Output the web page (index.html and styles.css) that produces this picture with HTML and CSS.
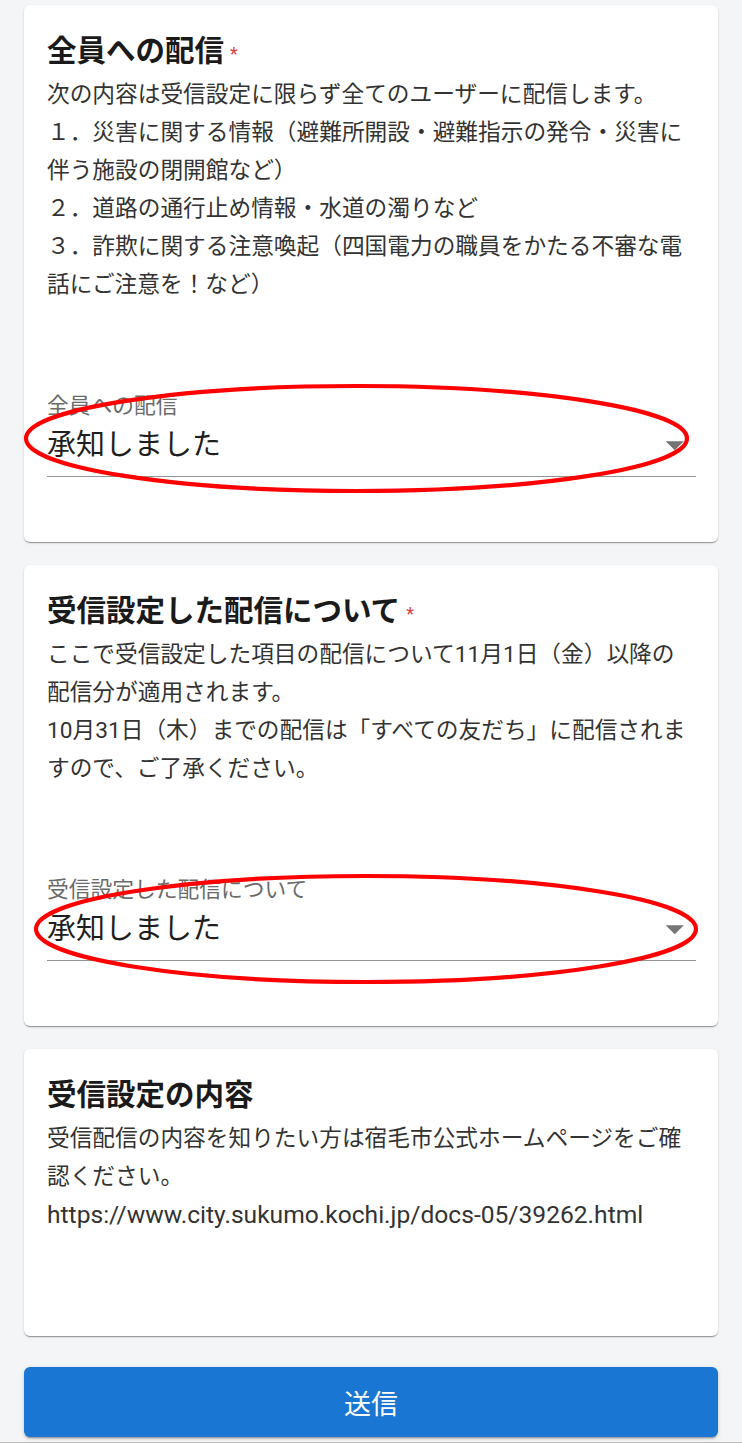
FILE: index.html
```html
<!DOCTYPE html>
<html lang="ja">
<head>
<meta charset="utf-8">
<title>受信設定</title>
<link rel="stylesheet" href="styles.css">
</head>
<body>
<div class="page">
  <section class="card">
    <h2 class="card-title">全員への配信<span class="req">*</span></h2>
    <div class="card-body">
      <p>次の内容は受信設定に限らず全てのユーザーに配信します。</p>
      <p>１．災害に関する情報（避難所開設・避難指示の発令・災害に伴う施設の閉開館など）</p>
      <p>２．道路の通行止め情報・水道の濁りなど</p>
      <p>３．詐欺に関する注意喚起（四国電力の職員をかたる不審な電話にご注意を！など）</p>
    </div>
    <div class="field">
      <div class="field-label">全員への配信</div>
      <div class="field-input">
        <span class="field-value">承知しました</span>
        <svg class="field-arrow" viewBox="0 0 24 24"><path d="M7 10l5 5 5-5z"/></svg>
      </div>
      <svg class="ring ring-1" viewBox="0 0 665 109"><ellipse cx="332.5" cy="54.5" rx="330.5" ry="52.5"/></svg>
    </div>
  </section>

  <section class="card">
    <h2 class="card-title">受信設定した配信について<span class="req">*</span></h2>
    <div class="card-body">
      <p>ここで受信設定した項目の配信について11月1日（金）以降の配信分が適用されます。</p>
      <p>10月31日（木）までの配信は「すべての友だち」に配信されますので、ご了承ください。</p>
    </div>
    <div class="field">
      <div class="field-label">受信設定した配信について</div>
      <div class="field-input">
        <span class="field-value">承知しました</span>
        <svg class="field-arrow" viewBox="0 0 24 24"><path d="M7 10l5 5 5-5z"/></svg>
      </div>
      <svg class="ring ring-2" viewBox="0 0 664 110"><ellipse cx="332" cy="55" rx="330" ry="53"/></svg>
    </div>
  </section>

  <section class="card card-info">
    <h2 class="card-title">受信設定の内容</h2>
    <div class="card-body">
      <p>受信配信の内容を知りたい方は宿毛市公式ホームページをご確認ください。</p>
      <p><span class="url">https://www.city.sukumo.kochi.jp/docs-05/39262.html</span></p>
    </div>
  </section>

  <button class="submit" type="button">送信</button>
</div>
<div class="bottom-line"></div>
</body>
</html>
```

FILE: styles.css
```css
* {
  box-sizing: border-box;
}

html, body {
  margin: 0;
  padding: 0;
  background: #f4f5f7;
}

body {
  width: 742px;
  height: 1443px;
  overflow: hidden;
  font-family: Roboto, "Noto Sans CJK JP", sans-serif;
  color: #333333;
}

.page {
  padding: 5px 24px 0;
  display: flex;
  flex-direction: column;
  gap: 23px;
}

.card {
  background: #ffffff;
  border-radius: 6px;
  box-shadow: 0 2px 1px -1px rgba(0, 0, 0, 0.22), 0 1px 1px 0 rgba(0, 0, 0, 0.16), 0 1px 3px 0 rgba(0, 0, 0, 0.12);
  padding: 28px 22px 65px 23px;
}

.card-info {
  padding-bottom: 101px;
}

.card-title {
  margin: 0;
  font-size: 29.5px;
  line-height: 36px;
  font-weight: 700;
  color: #1a1a1a;
  display: flex;
  align-items: flex-start;
}

.req {
  color: #d8423f;
  font-size: 18px;
  font-weight: 400;
  line-height: 18px;
  margin-left: 6px;
  margin-top: 12px;
}

.card-body {
  margin-top: 7px;
  font-size: 22.7px;
  line-height: 38px;
  color: #333333;
}

.card-body p {
  margin: 0;
}

.url {
  font-size: 24.6px;
}

.field {
  position: relative;
  margin-top: 90px;
}

.field-label {
  font-size: 21.75px;
  line-height: 24px;
  color: #6b6b6b;
}

.field-input {
  margin-top: 9px;
  height: 50px;
  padding-bottom: 13px;
  border-bottom: 1px solid #949494;
  display: flex;
  align-items: flex-start;
  justify-content: space-between;
}

.field-value {
  font-size: 29px;
  line-height: 36px;
  color: #1f1f1f;
}

.field-arrow {
  width: 43.5px;
  height: 43.5px;
  margin-top: -4px;
  fill: #757575;
  flex: none;
}

.ring {
  position: absolute;
  pointer-events: none;
  overflow: visible;
}

.ring ellipse {
  fill: none;
  stroke: #ff0000;
  stroke-width: 4.2;
}

.ring-1 {
  left: -23px;
  top: -10px;
  width: 665px;
  height: 109px;
}

.ring-2 {
  left: -13px;
  top: -4px;
  width: 664px;
  height: 110px;
}

.submit {
  margin-top: 8px;
  height: 70px;
  width: 100%;
  border: none;
  border-radius: 6px;
  background: #1976d2;
  color: #ffffff;
  font-family: Roboto, "Noto Sans CJK JP", sans-serif;
  font-size: 27px;
  font-weight: 400;
  box-shadow: 0 3px 1px -2px rgba(0, 0, 0, 0.2), 0 2px 2px 0 rgba(0, 0, 0, 0.14), 0 1px 5px 0 rgba(0, 0, 0, 0.12);
  cursor: pointer;
}

.bottom-line {
  margin-top: 5px;
  height: 2px;
  background: #bdbdbd;
}
```
